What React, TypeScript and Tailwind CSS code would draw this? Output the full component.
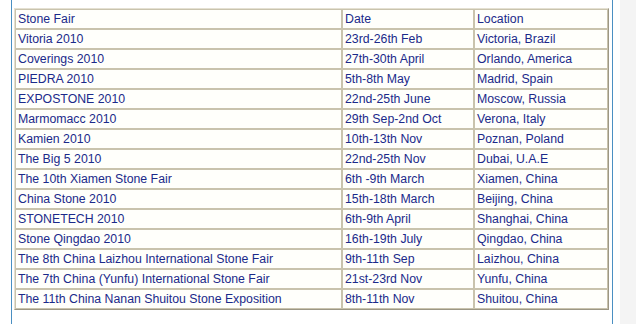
import React from 'react';

const fairs: [string, string, string][] = [
    ['Vitoria 2010', '23rd-26th Feb', 'Victoria, Brazil'],
    ['Coverings 2010', '27th-30th April', 'Orlando, America'],
    ['PIEDRA 2010', '5th-8th May', 'Madrid, Spain'],
    ['EXPOSTONE 2010', '22nd-25th June', 'Moscow, Russia'],
    ['Marmomacc 2010', '29th Sep-2nd Oct', 'Verona, Italy'],
    ['Kamien 2010', '10th-13th Nov', 'Poznan, Poland'],
    ['The Big 5 2010', '22nd-25th Nov', 'Dubai, U.A.E'],
    ['The 10th Xiamen Stone Fair', '6th -9th March', 'Xiamen, China'],
    ['China Stone 2010', '15th-18th March', 'Beijing, China'],
    ['STONETECH 2010', '6th-9th April', 'Shanghai, China'],
    ['Stone Qingdao 2010', '16th-19th July', 'Qingdao, China'],
    ['The 8th China Laizhou International Stone Fair', '9th-11th Sep', 'Laizhou, China'],
    ['The 7th China (Yunfu) International Stone Fair', '21st-23rd Nov', 'Yunfu, China'],
    ['The 11th China Nanan Shuitou Stone Exposition', '8th-11th Nov', 'Shuitou, China'],
];

const cell = 'h-[20px] border border-[#c9c3ad] bg-[#fffffb] p-0 pl-[2px] pt-[1px] text-left align-middle font-normal leading-[17px]';

export default function App() {
    return (
        <div className="flex h-[324px] w-[636px] bg-white font-['Liberation_Sans',Arial,sans-serif] text-[12.3px] text-[#1b2a8a]">
            <div className="w-[11px] shrink-0" />
            <div className="w-[602px] shrink-0 border-x border-[#4a8fc2] pl-[2px] pt-[8px]">
                <table className="w-[595px] table-fixed border-separate border-spacing-0 border border-t-[#e4e0d2] border-l-[#e4e0d2] border-r-[#9c9784] border-b-[#9c9784]">
                    <colgroup>
                        <col className="w-[327px]" />
                        <col className="w-[132px]" />
                        <col className="w-[134px]" />
                    </colgroup>
                    <thead>
                        <tr>
                            <th className={cell}>Stone Fair</th>
                            <th className={cell}>Date</th>
                            <th className={cell}>Location</th>
                        </tr>
                    </thead>
                    <tbody>
                        {fairs.map(([name, date, place]) => (
                            <tr key={name}>
                                <td className={cell}>{name}</td>
                                <td className={cell}>{date}</td>
                                <td className={cell}>{place}</td>
                            </tr>
                        ))}
                    </tbody>
                </table>
            </div>
            <div className="w-[7px] shrink-0" />
            <div className="flex-1 bg-[#f4f4f4]" />
        </div>
    );
}
